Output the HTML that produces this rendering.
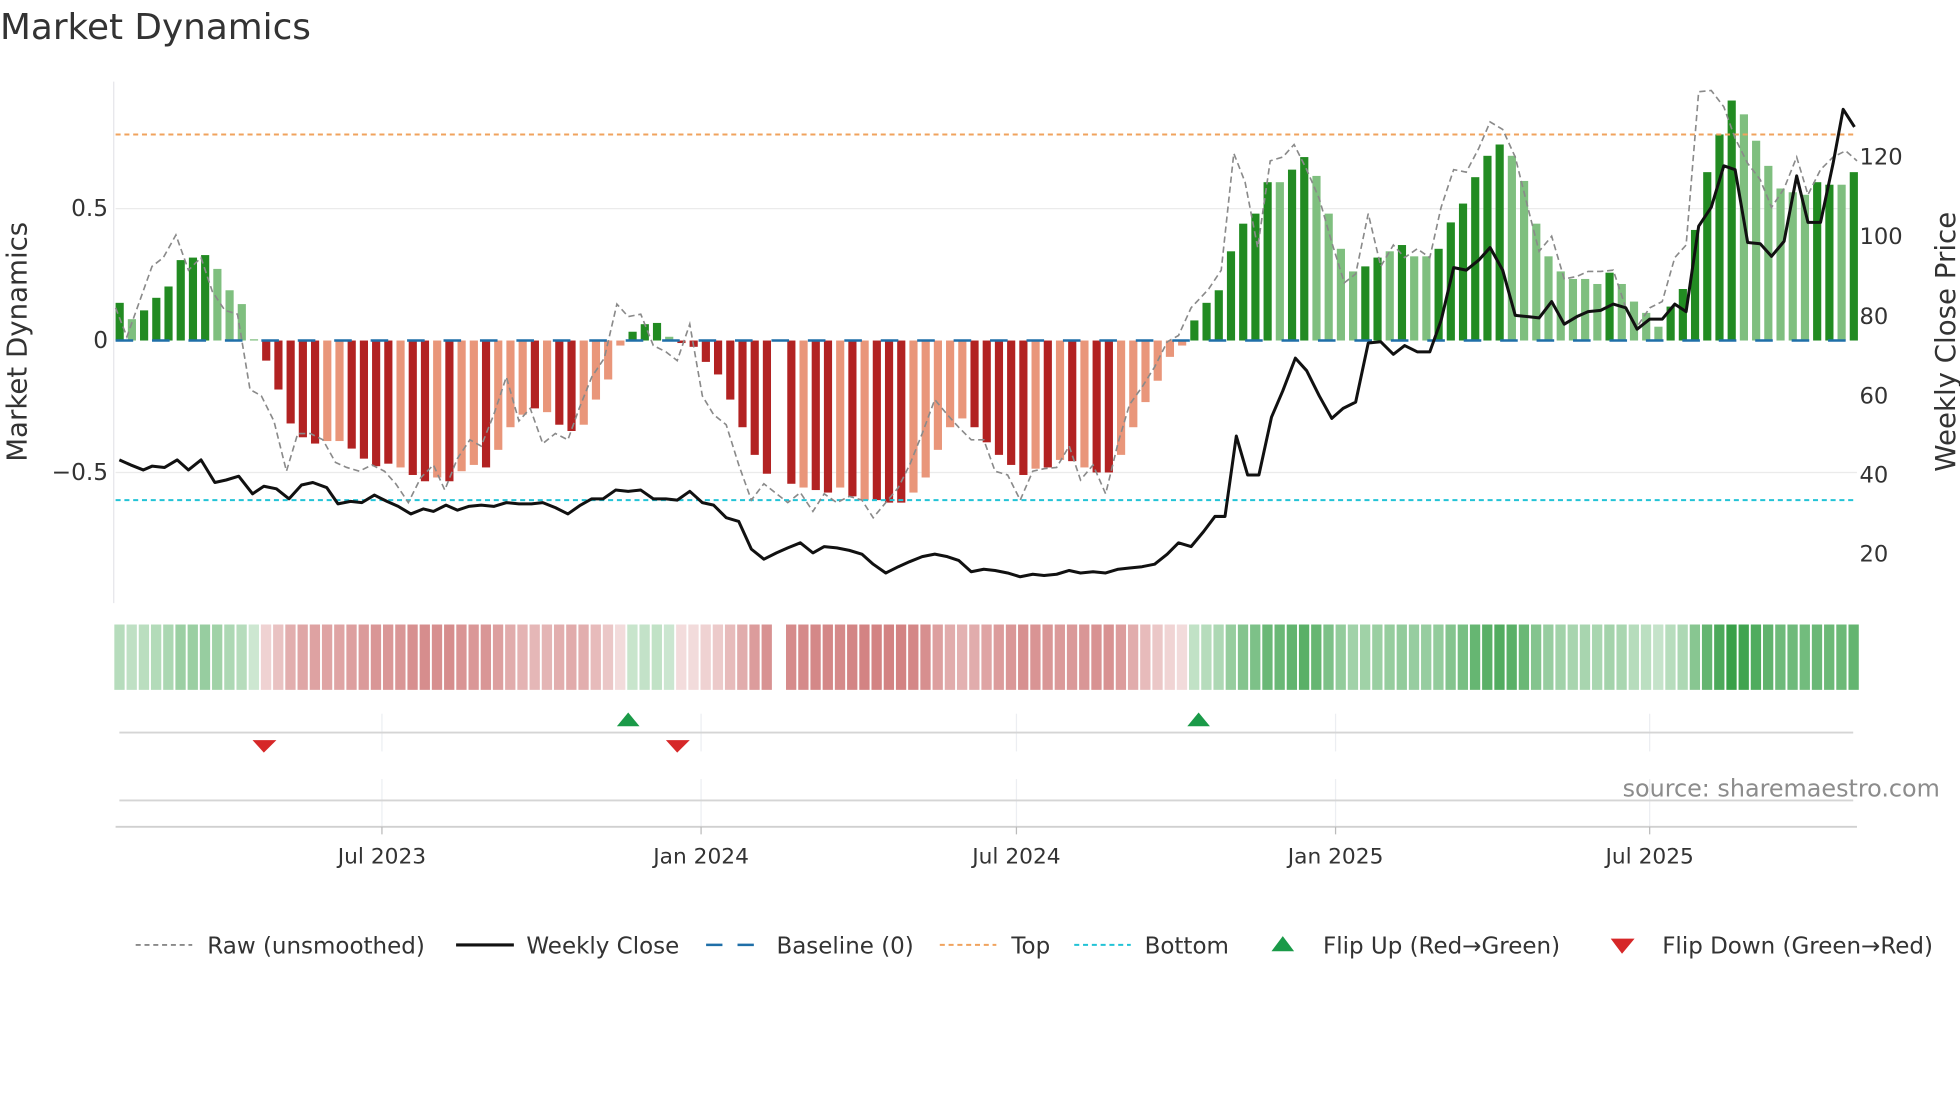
<!DOCTYPE html>
<html><head><meta charset="utf-8"><style>
html,body{margin:0;padding:0;background:#fff;width:1960px;height:1102px;overflow:hidden}
svg{display:block}
text{font-family:"DejaVu Sans","Liberation Sans",sans-serif;fill:#333}
</style></head><body>
<svg id="s" width="1960" height="1102" viewBox="0 0 1560 877" preserveAspectRatio="none" xmlns="http://www.w3.org/2000/svg">
<text x="0" y="31" font-size="28.5" fill="#333">Market Dynamics</text>
<line x1="90.5" y1="65" x2="90.5" y2="480" stroke="#e6e6ea" stroke-width="1"/>
<line x1="92" y1="166" x2="1478" y2="166" stroke="#ebebeb" stroke-width="1"/>
<line x1="92" y1="376" x2="1478" y2="376" stroke="#ebebeb" stroke-width="1"/>
<g id="bars"></g>
<g id="heat"></g>
<line x1="92" y1="271" x2="1478" y2="271" stroke="#1f6fa8" stroke-width="2" stroke-dasharray="14,15"/>
<line x1="92" y1="107" x2="1478" y2="107" stroke="#f0a35e" stroke-width="1.6" stroke-dasharray="4,3"/>
<line x1="92" y1="398" x2="1478" y2="398" stroke="#22c3d6" stroke-width="1.6" stroke-dasharray="4,3"/>
<polyline id="raw" fill="none" stroke="#8a8a8a" stroke-width="1.3" stroke-dasharray="5,3"/>
<polyline id="close" fill="none" stroke="#111" stroke-width="2.4" stroke-linejoin="round"/>
<text x="86" y="172" font-size="18.5" text-anchor="end">0.5</text>
<text x="86" y="277" font-size="18.5" text-anchor="end">0</text>
<text x="86" y="382" font-size="18.5" text-anchor="end">−0.5</text>
<text x="1480" y="131" font-size="18">120</text>
<text x="1480" y="194" font-size="18">100</text>
<text x="1480" y="258" font-size="18">80</text>
<text x="1480" y="321" font-size="18">60</text>
<text x="1480" y="384" font-size="18">40</text>
<text x="1480" y="447" font-size="18">20</text>
<text transform="translate(21,272) rotate(-90)" font-size="22" text-anchor="middle">Market Dynamics</text>
<text transform="translate(1556,272) rotate(-90)" font-size="22" text-anchor="middle">Weekly Close Price</text>
<g stroke="#eceef2" stroke-width="1">
<line x1="304" y1="568" x2="304" y2="598"/><line x1="558" y1="568" x2="558" y2="598"/><line x1="809" y1="568" x2="809" y2="598"/><line x1="1063" y1="568" x2="1063" y2="598"/><line x1="1313" y1="568" x2="1313" y2="598"/>
<line x1="304" y1="620" x2="304" y2="658"/><line x1="558" y1="620" x2="558" y2="658"/><line x1="809" y1="620" x2="809" y2="658"/><line x1="1063" y1="620" x2="1063" y2="658"/><line x1="1313" y1="620" x2="1313" y2="658"/>
</g>
<line x1="95" y1="583" x2="1475" y2="583" stroke="#d5d5d5" stroke-width="1.5"/>
<line x1="95" y1="637" x2="1475" y2="637" stroke="#d5d5d5" stroke-width="1.5"/>
<line x1="92" y1="658" x2="1478" y2="658" stroke="#d0d0d0" stroke-width="1.5"/>
<g stroke="#bbb" stroke-width="1"><line x1="304" y1="658" x2="304" y2="664"/><line x1="558" y1="658" x2="558" y2="664"/><line x1="809" y1="658" x2="809" y2="664"/><line x1="1063" y1="658" x2="1063" y2="664"/><line x1="1313" y1="658" x2="1313" y2="664"/></g>
<polygon points="491,578 500,567 509,578" fill="#1a9a48"/>
<polygon points="945,578 954,567 963,578" fill="#1a9a48"/>
<polygon points="201,589 220,589 210,599" fill="#d62728"/>
<polygon points="530,589 549,589 539,599" fill="#d62728"/>
<text x="1544" y="634" font-size="19" text-anchor="end" style="fill:#8c8c8c">source: sharemaestro.com</text>
<text x="304" y="687" font-size="17.3" text-anchor="middle">Jul 2023</text>
<text x="558" y="687" font-size="17.3" text-anchor="middle">Jan 2024</text>
<text x="809" y="687" font-size="17.3" text-anchor="middle">Jul 2024</text>
<text x="1063" y="687" font-size="17.3" text-anchor="middle">Jan 2025</text>
<text x="1313" y="687" font-size="17.3" text-anchor="middle">Jul 2025</text>
<line x1="108" y1="752" x2="153" y2="752" stroke="#8a8a8a" stroke-width="1.5" stroke-dasharray="4,3"/>
<text x="165" y="759" font-size="18.3">Raw (unsmoothed)</text>
<line x1="363" y1="752" x2="409" y2="752" stroke="#111" stroke-width="2.5"/>
<text x="419" y="759" font-size="18.3">Weekly Close</text>
<line x1="562" y1="752" x2="607" y2="752" stroke="#1f6fa8" stroke-width="2" stroke-dasharray="13,12"/>
<text x="618" y="759" font-size="18.3">Baseline (0)</text>
<line x1="748" y1="752" x2="793" y2="752" stroke="#f0a35e" stroke-width="1.6" stroke-dasharray="4,3"/>
<text x="805" y="759" font-size="18.3">Top</text>
<line x1="855" y1="752" x2="900" y2="752" stroke="#22c3d6" stroke-width="1.6" stroke-dasharray="4,3"/>
<text x="911" y="759" font-size="18.3">Bottom</text>
<polygon points="1012,757 1021,745 1030,757" fill="#1a9a48"/>
<text x="1053" y="759" font-size="18.3">Flip Up (Red→Green)</text>
<polygon points="1282,747 1301,747 1291,759" fill="#d62728"/>
<text x="1323" y="759" font-size="18.3">Flip Down (Green→Red)</text>
</svg>
<script>
var tops=[241,254,247,237,228,207,205,203,214,231,242,270,287,310,337,348,353,351,351,357,365,371,369,372,378,383,380,383,375,370,372,358,340,330,325,328,338,343,338,318,302,275,264,258,257,268,273,276,288,298,318,340,362,377,null,385,388,390,392,388,395,398,398,400,400,392,380,358,340,333,340,352,362,370,378,373,372,366,367,372,376,376,362,340,320,303,284,275,255,241,231,200,178,170,145,145,135,125,140,170,198,216,212,205,200,195,204,204,198,177,162,141,124,115,124,144,178,204,216,222,222,226,217,226,240,249,260,244,230,183,137,107,80,91,112,132,150,153,155,145,147,147,137];
var dk="DLDDDDDDLLLLDDDDDLLDDDDLDDLDLLDLLLDLDDLLLLDDDLDDDDDDDDxDLDDLDLDDDLLLLLDDDDDLDLDLDDLLLLLLDDDDDDDLDDLLLLDDLDLLDDDDDDLLLLLLLLDLLLLDDDDDDLLLLLLDDLD";
var ns="http://www.w3.org/2000/svg",B=document.getElementById('bars'),H=document.getElementById('heat');
function R(g,x,y,w,h,f){var r=document.createElementNS(ns,'rect');r.setAttribute('x',x);r.setAttribute('y',y);r.setAttribute('width',w);r.setAttribute('height',h);r.setAttribute('fill',f);g.appendChild(r);}
for(var i=0;i<tops.length;i++){var t=tops[i];if(t===null)continue;var x=92+i*9.72;var pos=t<271;var d=dk[i]==='D';
var col=pos?(d?'#228b22':'#7fbf7f'):(d?'#b22222':'#e9967a');
if(pos)R(B,x,t,6.5,271-t,col);else R(B,x,271,6.5,t-271,col);
var v=Math.abs(271-t)/210;var a;
if(pos){a=0.25+0.75*Math.min(v/0.9,1);R(H,x-1,497,8.2,52,'rgba(56,160,72,'+a.toFixed(2)+')');}
else{a=0.2+0.55*Math.min(v/0.6,1);R(H,x-1,497,8.2,52,'rgba(196,90,90,'+a.toFixed(2)+')');}}
document.getElementById('raw').setAttribute('points',"92,245 101,268 111,240 121,212 130,205 140,187 150,215 160,205 169,232 179,247 189,250 199,310 208,315 218,335 228,375 237,345 247,345 257,350 267,368 276,372 286,375 296,370 306,375 315,385 325,400 335,380 345,370 354,390 364,365 374,350 383,355 393,330 403,300 413,335 422,325 432,353 442,345 452,350 461,325 471,300 481,285 491,242 500,252 510,250 520,275 530,280 539,287 549,258 559,315 568,330 578,338 588,370 598,398 608,385 627,400 637,392 647,407 656,393 666,400 676,395 686,398 695,412 705,400 715,388 724,370 734,345 744,318 754,330 763,340 773,350 783,350 792,375 802,378 812,398 822,375 831,373 841,372 851,355 860,382 870,370 880,393 890,352 899,322 909,308 919,292 929,272 938,267 948,245 962,230 972,215 982,122 991,145 1001,197 1011,128 1021,125 1030,115 1040,135 1050,158 1060,193 1070,225 1079,218 1089,170 1099,212 1109,195 1118,205 1128,198 1138,205 1147,165 1157,135 1167,137 1177,118 1186,97 1196,103 1206,125 1216,165 1225,200 1235,188 1245,222 1255,220 1264,216 1274,216 1284,215 1294,245 1303,260 1313,245 1323,240 1333,205 1342,195 1352,73 1362,72 1372,85 1381,110 1391,130 1401,143 1410,165 1420,150 1430,125 1439,155 1449,135 1459,125 1469,120 1478,128");
document.getElementById('close').setAttribute('points',"95,366 104,370 114,374 121,371 131,372 141,366 150,374 160,366 171,384 180,382 190,379 201,393 210,387 220,389 230,397 240,386 249,384 260,388 269,401 279,399 288,400 298,394 308,399 317,403 327,409 337,405 345,407 355,402 364,406 373,403 383,402 393,403 403,400 413,401 423,401 432,400 442,404 452,409 462,402 471,397 480,397 490,390 500,391 510,390 520,397 530,397 539,398 549,391 559,400 568,402 578,412 588,415 598,437 608,445 618,440 627,436 637,432 647,440 656,435 666,436 676,438 686,441 695,449 705,456 715,451 724,447 734,443 744,441 754,443 763,446 773,455 783,453 792,454 802,456 812,459 822,457 831,458 841,457 851,454 860,456 870,455 880,456 890,453 899,452 909,451 919,449 929,441 938,432 948,435 958,423 967,411 975,411 984,347 993,378 1002,378 1012,332 1021,311 1031,285 1040,295 1050,315 1060,333 1069,325 1079,320 1089,273 1099,272 1109,282 1118,275 1128,280 1138,280 1147,255 1157,213 1167,215 1177,207 1186,197 1196,215 1206,251 1216,252 1225,253 1235,240 1245,258 1255,252 1264,248 1274,247 1284,242 1294,245 1303,262 1313,254 1323,254 1333,242 1342,248 1352,180 1362,165 1372,132 1381,135 1391,193 1401,194 1410,204 1420,192 1430,140 1439,177 1449,177 1459,130 1467,87 1476,101");
</script>
</body></html>
